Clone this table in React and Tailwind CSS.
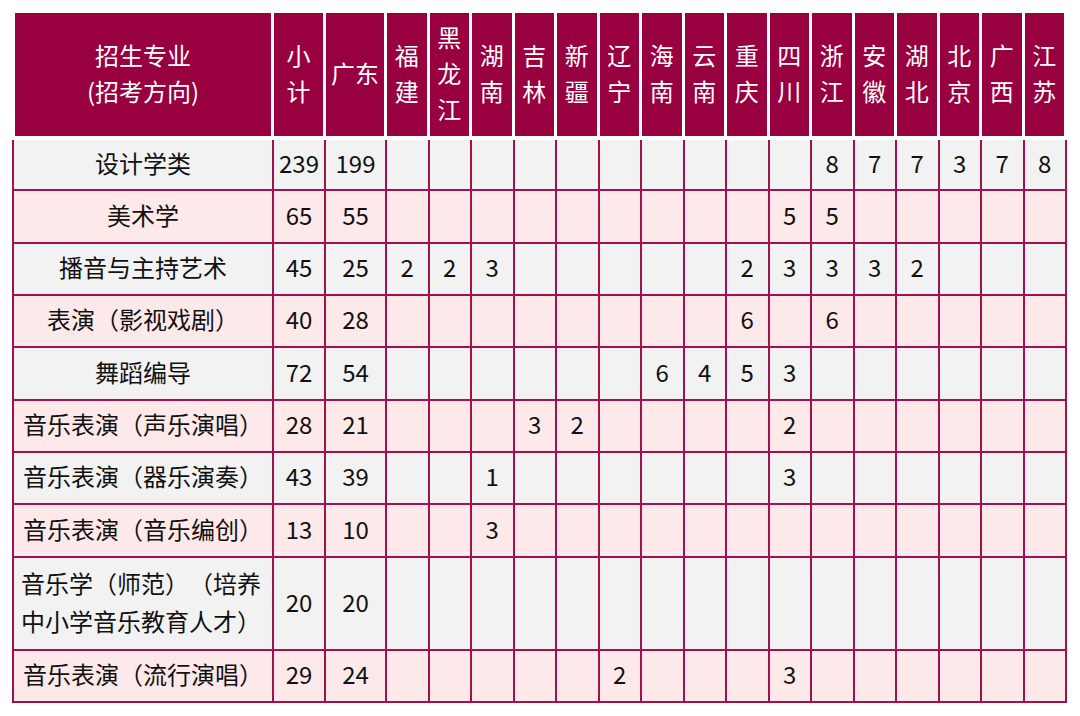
import React from "react";

const provinces = ["福建", "黑龙江", "湖南", "吉林", "新疆", "辽宁", "海南", "云南", "重庆", "四川", "浙江", "安徽", "湖北", "北京", "广西", "江苏"];

// each row: name, 小计, 广东, then values keyed by province
const rows = [
  { name: "设计学类", total: 239, gd: 199, v: { 浙江: 8, 安徽: 7, 湖北: 7, 北京: 3, 广西: 7, 江苏: 8 }, h: "h-[51px]" },
  { name: "美术学", total: 65, gd: 55, v: { 四川: 5, 浙江: 5 }, h: "h-[53px]" },
  { name: "播音与主持艺术", total: 45, gd: 25, v: { 福建: 2, 黑龙江: 2, 湖南: 3, 重庆: 2, 四川: 3, 浙江: 3, 安徽: 3, 湖北: 2 }, h: "h-[52px]" },
  { name: "表演（影视戏剧）", total: 40, gd: 28, v: { 重庆: 6, 浙江: 6 }, h: "h-[52px]" },
  { name: "舞蹈编导", total: 72, gd: 54, v: { 海南: 6, 云南: 4, 重庆: 5, 四川: 3 }, h: "h-[53px]" },
  { name: "音乐表演（声乐演唱）", total: 28, gd: 21, v: { 吉林: 3, 新疆: 2, 四川: 2 }, h: "h-[52px]" },
  { name: "音乐表演（器乐演奏）", total: 43, gd: 39, v: { 湖南: 1, 四川: 3 }, h: "h-[52px]" },
  { name: "音乐表演（音乐编创）", total: 13, gd: 10, v: { 湖南: 3 }, h: "h-[53px]" },
  { name: ["音乐学（师范）（培养", "中小学音乐教育人才）"], total: 20, gd: 20, v: {}, h: "h-[93px]" },
  { name: "音乐表演（流行演唱）", total: 29, gd: 24, v: { 辽宁: 2, 四川: 3 }, h: "h-[52px]" },
];

const cols = "grid grid-cols-[260px_52px_61px_repeat(16,minmax(0,1fr))]";

function HeadCell({ children, first }) {
  return (
    <div className={`bg-[#98003f] border-r-[3px] border-white text-white flex flex-col items-center justify-center leading-[36px] pb-[3px] ${first ? "ml-[1px]" : ""}`}>
      {children}
    </div>
  );
}

function Stack({ text }) {
  return text.split("").map((c, i) => <span key={i}>{c}</span>);
}

const cell = "border-r-2 border-b-2 border-[#a3104f] flex items-center justify-center pb-[4px]";

export default function App() {
  return (
    <div
      className="w-[1080px] h-[716px] bg-white pt-[13px] pl-[12px] text-[24px] text-[#111]"
      style={{ fontFamily: '"Noto Sans CJK SC", "Noto Sans", sans-serif' }}
    >
      <div className="w-[1055px]">
        <div className={`${cols} h-[123px] pl-[2px]`}>
          <HeadCell first>
            <span>招生专业</span>
            <span>(招考方向)</span>
          </HeadCell>
          <HeadCell>
            <Stack text="小计" />
          </HeadCell>
          <HeadCell>
            <span>广东</span>
          </HeadCell>
          {provinces.map((p) => (
            <HeadCell key={p}>
              <Stack text={p} />
            </HeadCell>
          ))}
        </div>

        <div className="mt-[4px] border-l-2 border-[#a3104f]">
          {rows.map((r, i) => (
            <div key={i} className={`${cols} ${r.h} ${i % 2 === 0 ? "bg-[#f2f2f2]" : "bg-[#fde9e9]"}`}>
              <div className={`${cell} flex-col leading-[38px]`}>
                {Array.isArray(r.name) ? (
                  <div className="w-full pl-[7px] text-left [text-spacing-trim:space-all]">
                    <div className="whitespace-nowrap">{r.name[0]}</div>
                    <div className="whitespace-nowrap">{r.name[1]}</div>
                  </div>
                ) : (
                  <span className="whitespace-nowrap">{r.name}</span>
                )}
              </div>
              <div className={cell}>{r.total}</div>
              <div className={cell}>{r.gd}</div>
              {provinces.map((p) => (
                <div key={p} className={cell}>
                  {r.v[p] ?? ""}
                </div>
              ))}
            </div>
          ))}
        </div>
      </div>
    </div>
  );
}
